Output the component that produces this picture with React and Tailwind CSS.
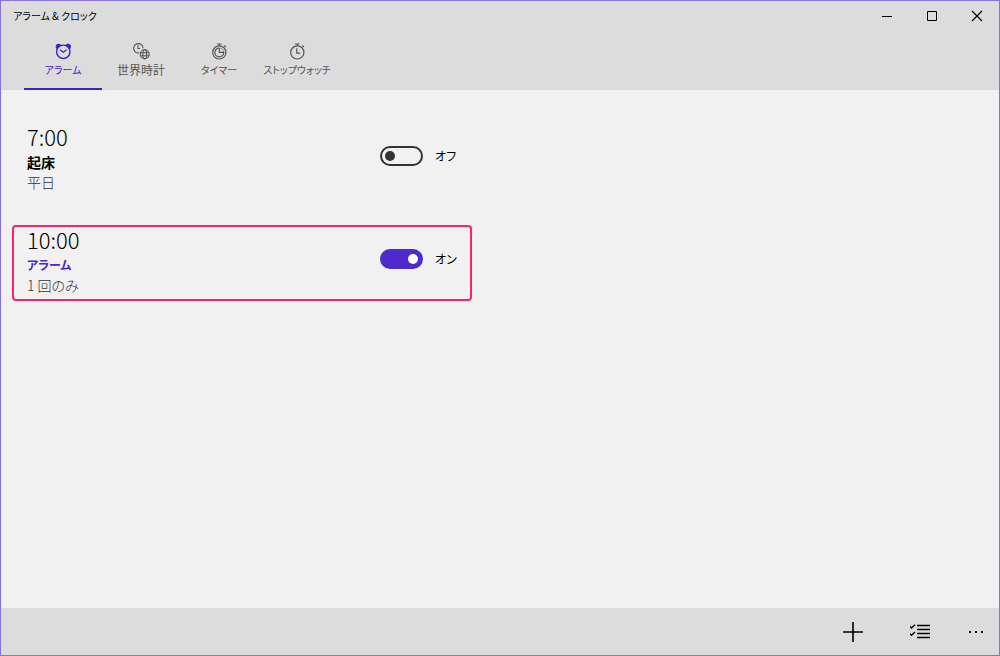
import React, { useState } from 'react';

function AlarmIcon() {
  return (
    <svg width="18" height="18" viewBox="0 0 18 18" fill="none" stroke="currentColor" strokeWidth="1.4">
      <circle cx="4.6" cy="4.6" r="2.9" fill="currentColor" stroke="none" />
      <circle cx="14" cy="4.6" r="2.9" fill="currentColor" stroke="none" />
      <circle cx="9.3" cy="9.8" r="6.7" className="fill-[#dcdcdc]" />
      <path d="m6 7.8 3.3 2.4 3.3-2.4" strokeWidth="1.2" />
    </svg>
  );
}

function WorldClockIcon() {
  return (
    <svg width="18" height="18" viewBox="0 0 18 18" fill="none" stroke="currentColor" strokeWidth="1.1">
      <path d="M7.2 10.9A4.7 4.7 0 1 1 11 6.3" />
      <path d="M6 3.2v3.3h2.2" />
      <circle cx="12.7" cy="12.3" r="4.5" />
      <ellipse cx="12.7" cy="12.3" rx="1.9" ry="4.5" />
      <path d="M8.5 10.8h8.4M8.5 13.8h8.4" />
    </svg>
  );
}

function TimerIcon() {
  return (
    <svg width="18" height="18" viewBox="0 0 18 18" fill="none" stroke="currentColor" strokeWidth="1.2">
      <circle cx="9.3" cy="10.4" r="6.6" />
      <path d="M9.3 6v4.4h4.4A4.4 4.4 0 1 1 9.3 6" />
      <path d="M9.3 6a4.4 4.4 0 0 1 4.4 4.4" strokeWidth="0.6" />
      <path d="M7 2h4.6M9.3 2v2M14.3 3.5l1.7 1.6" />
    </svg>
  );
}

function StopwatchIcon() {
  return (
    <svg width="18" height="18" viewBox="0 0 18 18" fill="none" stroke="currentColor" strokeWidth="1.2">
      <circle cx="9.3" cy="10.4" r="6.6" />
      <path d="M8.8 6.2v5h3.4" />
      <path d="M7 2h4.6M9.3 2v2M14.3 3.5l1.7 1.6" />
    </svg>
  );
}

const tabs = [
  { id: 'alarm', label: 'アラーム', Icon: AlarmIcon, text: 'text-[10px]' },
  { id: 'world', label: '世界時計', Icon: WorldClockIcon, text: 'text-[12px]' },
  { id: 'timer', label: 'タイマー', Icon: TimerIcon, text: 'text-[10px]' },
  { id: 'stopwatch', label: 'ストップウォッチ', Icon: StopwatchIcon, text: 'text-[10px]' },
];

const initialAlarms = [
  { id: 1, time: '7:00', name: '起床', repeat: '平日', on: false, text: 'text-[14px]' },
  { id: 2, time: '10:00', name: 'アラーム', repeat: '1 回のみ', on: true, text: 'text-[12px]' },
];

function TitleBar() {
  return (
    <div className="flex h-[30px] items-center justify-between">
      <h1 className="pl-3 text-[10px] leading-4">アラーム & クロック</h1>
      <div className="flex">
        <button type="button" aria-label="最小化" className="flex h-[30px] w-[45px] items-center justify-center">
          <svg width="12" height="12" viewBox="0 0 12 12" stroke="currentColor">
            <path d="M1 6.5h10" />
          </svg>
        </button>
        <button type="button" aria-label="最大化" className="flex h-[30px] w-[45px] items-center justify-center">
          <svg width="12" height="12" viewBox="0 0 12 12" fill="none" stroke="currentColor">
            <path d="M1.5 1.5h9v9h-9z" />
          </svg>
        </button>
        <button type="button" aria-label="閉じる" className="flex h-[30px] w-[45px] items-center justify-center">
          <svg width="12" height="12" viewBox="0 0 12 12" stroke="currentColor" strokeWidth="1.1">
            <path d="m1 1 10 10M11 1 1 11" />
          </svg>
        </button>
      </div>
    </div>
  );
}

function AlarmItem({ alarm, onToggle }) {
  const switchId = `alarm-${alarm.id}`;

  return (
    <li
      className={`flex h-[76px] items-start justify-between rounded-[4px] border-2 px-[13px] ${
        alarm.on ? 'border-[#f8246c]' : 'border-transparent'
      }`}
    >
      <div>
        <p className="text-[22px] leading-6 font-light">{alarm.time}</p>
        <p className={`${alarm.text} leading-7 font-bold ${alarm.on ? 'text-[#4a26c9]' : 'text-black'}`}>
          {alarm.name}
        </p>
        <p className="text-[14px] leading-3 font-light text-[#333333]">{alarm.repeat}</p>
      </div>
      <div className="mt-[22px] flex items-center">
        <input
          type="checkbox"
          role="switch"
          id={switchId}
          checked={alarm.on}
          onChange={() => onToggle(alarm.id)}
          className="flex h-5 w-[43px] cursor-pointer appearance-none items-center rounded-full border-2 border-[#333333] px-[3px] before:h-[10px] before:w-[10px] before:rounded-full before:bg-[#333333] checked:justify-end checked:border-[#4f29cc] checked:bg-[#4f29cc] checked:before:bg-white"
        />
        <label htmlFor={switchId} className="w-[34px] pl-3 text-[12px] leading-5 whitespace-nowrap">
          {alarm.on ? 'オン' : 'オフ'}
        </label>
      </div>
    </li>
  );
}

function App() {
  const [activeTab, setActiveTab] = useState('alarm');
  const [alarms, setAlarms] = useState(initialAlarms);

  const toggleAlarm = (id) => {
    setAlarms(alarms.map((a) => (a.id === id ? { ...a, on: !a.on } : a)));
  };

  return (
    <div
      lang="ja"
      className="flex min-h-screen flex-col border border-[#8b70e0] bg-[#f1f1f1] font-['Noto_Sans_CJK_JP',sans-serif] text-black [font-feature-settings:'palt']"
    >
      <header className="bg-[#dcdcdc]">
        <TitleBar />
        <nav className="flex pl-[23px]">
          {tabs.map(({ id, label, Icon, text }) => (
            <button
              key={id}
              type="button"
              onClick={() => setActiveTab(id)}
              className={`flex h-[59px] w-[78px] flex-col items-center border-b-2 pt-[11px] ${
                activeTab === id ? 'border-[#4420c4] text-[#4420c4]' : 'border-transparent text-[#555555]'
              }`}
            >
              <Icon />
              <span className={`${text} leading-5 whitespace-nowrap`}>{label}</span>
            </button>
          ))}
        </nav>
      </header>

      <main className="flex-1 pt-8 pl-[11px]">
        <ul className="flex max-w-[460px] flex-col gap-[27px]">
          {alarms.map((alarm) => (
            <AlarmItem key={alarm.id} alarm={alarm} onToggle={toggleAlarm} />
          ))}
        </ul>
      </main>

      <footer className="flex h-[47px] items-center justify-end bg-[#dcdcdc]">
        <button type="button" aria-label="新しいアラーム" className="flex h-[47px] w-[67px] items-center justify-center">
          <svg width="20" height="20" viewBox="0 0 20 20" stroke="currentColor" strokeWidth="1.6">
            <path d="M0 10h20M10 0v20" />
          </svg>
        </button>
        <button type="button" aria-label="選択" className="flex h-[47px] w-[67px] items-center justify-center">
          <svg width="20" height="16" viewBox="0 0 20 16" fill="none" stroke="currentColor" strokeWidth="1.3">
            <path d="M7 1.5h13M7 5.5h13M7 9.5h13M7 13.5h13" />
            <path d="m0 2.5 1.5 1.5L5 .7M0 9.8l1.5 1.5L5 8" />
          </svg>
        </button>
        <button type="button" aria-label="その他" className="flex h-[47px] w-[46px] items-center justify-center">
          <svg width="16" height="4" viewBox="0 0 16 4" fill="currentColor">
            <path d="M1 1h2v2H1zM7 1h2v2H7zM13 1h2v2h-2z" />
          </svg>
        </button>
      </footer>
    </div>
  );
}

export default App;
